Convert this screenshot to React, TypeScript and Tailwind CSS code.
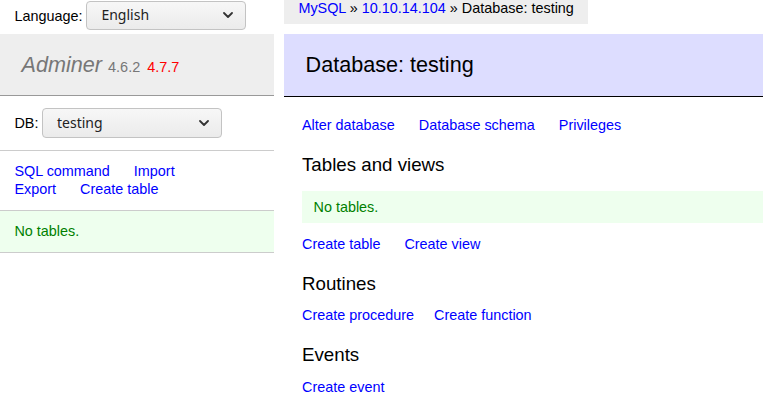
import React from "react";

function Chevron() {
  return (
    <svg width="10" height="6" viewBox="0 0 10 6" className="shrink-0">
      <path d="M1 1 L5 5 L9 1" fill="none" stroke="#333" strokeWidth="1.8" strokeLinecap="round" strokeLinejoin="round" />
    </svg>
  );
}

function FakeSelect({ value, className }: { value: string; className: string }) {
  return (
    <div
      className={
        "flex items-center justify-between rounded-[4px] border border-[#c3c3c3] bg-gradient-to-b from-[#f7f7f7] to-[#ebebeb] pl-[14px] pr-[12px] text-[14px] text-[#222] " +
        className
      }
      style={{ fontFamily: '"Noto Sans", "DejaVu Sans", sans-serif' }}
    >
      <span>{value}</span>
      <Chevron />
    </div>
  );
}

function A({ children }: { children: React.ReactNode }) {
  return <a className="text-[#0000ff] whitespace-nowrap cursor-pointer">{children}</a>;
}

export default function App() {
  return (
    <div
      className="flex min-h-[414px] w-[763px] overflow-hidden bg-white text-[14.4px] leading-[18px] text-black"
      style={{ fontFamily: '"Liberation Sans", Arial, sans-serif' }}
    >
      {/* Left menu */}
      <div className="w-[274px] shrink-0">
        <div className="flex h-[34px] items-start pl-[14.4px]">
          <span className="mt-[7px]">Language:</span>
          <FakeSelect value="English" className="ml-[4px] mt-[0.5px] h-[29px] w-[159.5px]" />
        </div>
        <h1 className="h-[62px] border-b border-[#999] bg-[#eee] px-[21.6px] py-[17.28px] text-[21.6px] font-normal leading-[27px]">
          <span className="italic text-[#777]">Adminer</span>{" "}
          <span className="text-[14.47px] leading-none text-[#777]">4.6.2</span>
          <span className="ml-[7px] text-[14.47px] leading-none text-[#ff0000]">4.7.7</span>
        </h1>
        <div className="flex items-center border-b border-[#ccc] px-[14.4px] py-[11.52px]">
          <span>DB:</span>
          <FakeSelect value="testing" className="ml-[3.6px] h-[30.5px] w-[180px]" />
        </div>
        <div className="flex flex-col border-b border-[#ccc] px-[14.4px] py-[11.52px]">
          <div className="flex gap-x-[24px]">
            <A>SQL command</A>
            <A>Import</A>
          </div>
          <div className="flex gap-x-[24px]">
            <A>Export</A>
            <A>Create table</A>
          </div>
        </div>
        <p className="border-b border-[#ccc] bg-[#efe] px-[14.4px] py-[11.52px] text-[#008000]">No tables.</p>
      </div>

      {/* Right content */}
      <div className="ml-[10px] flex min-w-0 flex-1 flex-col">
        <div className="flex h-[34px] items-start">
          <div className="h-[24px] bg-[#eee] px-[14.4px] leading-[16px] whitespace-nowrap">
            <A>MySQL</A> » <A>10.10.14.104</A> » Database: testing
          </div>
        </div>
        <h2 className="border-b border-black bg-[#ddf] px-[21.6px] py-[17.28px] text-[21.6px] font-normal leading-[27px] text-black">
          Database: testing
        </h2>
        <div className="flex flex-col pl-[18px]">
          <div className="mt-[19px] flex gap-x-[24px]">
            <A>Alter database</A>
            <A>Database schema</A>
            <A>Privileges</A>
          </div>
          <h3 className="mt-[19px] text-[18.72px] font-normal leading-[23.4px]">Tables and views</h3>
          <p className="mt-[15px] bg-[#efe] px-[11.52px] py-[7.2px] text-[#008000]">No tables.</p>
          <div className="mt-[11.52px] flex gap-x-[24px]">
            <A>Create table</A>
            <A>Create view</A>
          </div>
          <h3 className="mt-[19.5px] text-[18.72px] font-normal leading-[23.4px]">Routines</h3>
          <div className="mt-[10px] flex gap-x-[20px]">
            <A>Create procedure</A>
            <A>Create function</A>
          </div>
          <h3 className="mt-[19.5px] text-[18.72px] font-normal leading-[23.4px]">Events</h3>
          <div className="mt-[11.52px] flex gap-x-[24px]">
            <A>Create event</A>
          </div>
        </div>
      </div>
    </div>
  );
}
